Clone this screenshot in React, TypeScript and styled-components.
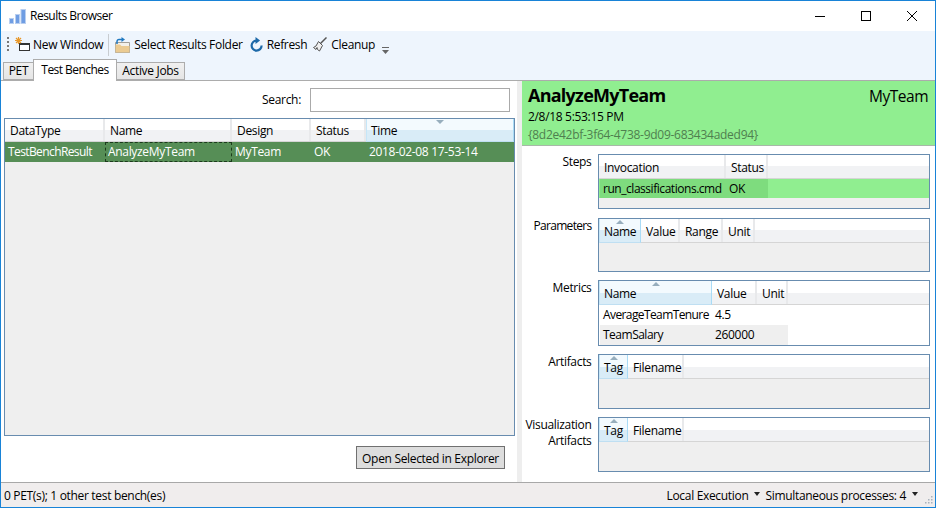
import React from "react";
import styled, { createGlobalStyle } from "styled-components";

const Global = createGlobalStyle`
  html, body { margin: 0; padding: 0; background: #fff; }
  * { box-sizing: border-box; }
  body { font-family: "Open Sans", "Noto Sans", sans-serif; font-size: 12px; color: #000; letter-spacing: -0.32px; }
`;

const Window = styled.div`
  width: 936px; height: 508px; display: flex; flex-direction: column;
  border: 1px solid #1883d7; background: #fff; overflow: hidden;
`;
const TitleBar = styled.div`
  height: 30px; flex: none; display: flex; align-items: center; padding-left: 8px; background: #fff;
`;
const TitleText = styled.div` margin: 0 0 2px 4px; flex: 1; letter-spacing: -0.5px; `;
const WinButton = styled.div`
  width: 46px; height: 30px; display: flex; align-items: center; justify-content: center;
`;
const Toolbar = styled.div`
  height: 27px; flex: none; display: flex; align-items: center; padding-left: 6px; background: #eef5fd;
`;
const Grip = styled.svg` width: 2px; height: 16px; margin-right: 6px; flex: none; `;
const ToolButton = styled.div<{ $gap?: number; $inner?: number }>`
  display: flex; align-items: center; gap: ${p => p.$inner ?? 4}px; margin-right: ${p => p.$gap ?? 7}px; white-space: nowrap;
`;
const ToolSeparator = styled.div` width: 1px; height: 22px; background: #c8ccd0; margin-right: 6px; `;
const Overflow = styled.svg` width: 7px; height: 7px; margin-top: 12px; `;
const TabStrip = styled.div`
  height: 23px; flex: none; display: flex; align-items: flex-end; padding-left: 3px;
  background: #eef5fd; border-bottom: 1px solid #acacac;
`;
const Tab = styled.div<{ $active?: boolean; $w: number }>`
  width: ${p => p.$w}px;
  height: ${p => (p.$active ? 22 : 18)}px;
  margin-bottom: ${p => (p.$active ? -1 : 0)}px;
  padding-top: ${p => (p.$active ? 2 : 0)}px;
  margin-left: -1px;
  position: relative; z-index: ${p => (p.$active ? 1 : 0)};
  background: ${p => (p.$active ? "#fff" : "linear-gradient(#f0f0f0, #e5e5e5)")};
  border: 1px solid #acacac; ${p => (p.$active ? "border-bottom: none; letter-spacing: -0.55px;" : "")}
  white-space: nowrap; line-height: 16px; text-align: center;
`;
const Content = styled.div` flex: 1; min-height: 0; display: flex; `;
const LeftPane = styled.div` width: 516px; flex: none; display: flex; flex-direction: column; `;
const SearchRow = styled.div`
  display: flex; align-items: center; justify-content: flex-end; gap: 9px;
  padding: 7px 7px 0 0; height: 31px; flex: none;
`;
const SearchLabel = styled.div` padding-bottom: 2px; `;
const SearchInput = styled.div` width: 200px; height: 24px; border: 1px solid #aaa; background: #fff; `;
const LeftGridWrap = styled.div` flex: 1; min-height: 0; display: flex; margin: 6px 2px 0 3px; `;
const ButtonRow = styled.div`
  flex: none; height: 46px; display: flex; justify-content: flex-end; padding: 10px 12px 0 0;
`;
const PushButton = styled.div`
  width: 149px; height: 23px; border: 1px solid #707070; background: #dddddd; padding-top: 1px;
  display: flex; align-items: center; justify-content: center; white-space: nowrap;
`;
const Splitter = styled.div` width: 5px; flex: none; background: #eeeeee; `;
const RightPane = styled.div` flex: 1; min-width: 0; display: flex; flex-direction: column; `;
const Header = styled.div`
  height: 65px; flex: none; background: #90ee90; border-bottom: 1px solid #a8b8a8;
  padding: 2px 7px 0 6px; display: flex; flex-direction: column;
`;
const HeaderTop = styled.div` display: flex; justify-content: space-between; align-items: center; height: 24px; `;
const ResultTitle = styled.div` font-size: 18px; font-weight: 700; letter-spacing: -0.75px; margin-top: -1px; `;
const ResultDesign = styled.div` font-size: 15.5px; letter-spacing: -0.5px; margin-top: 2px; `;
const HeaderDate = styled.div` line-height: 17px; margin-top: 1px; `;
const HeaderGuid = styled.div` line-height: 17px; margin-top: 1px; color: #4f7f4f; letter-spacing: -0.27px; `;
const Sections = styled.div`
  flex: 1; display: flex; flex-direction: column; padding: 8px 5px 0 0;
`;
const Section = styled.div<{ $h: number; $after: number }>`
  height: ${p => p.$h}px; margin-bottom: ${p => p.$after}px; flex: none; display: flex;
`;
const SectionLabel = styled.div<{ $tight?: boolean }>`
  width: 76px; flex: none; padding-right: 6.5px; text-align: right; line-height: 16px;
  ${p => (p.$tight ? "letter-spacing: -0.7px;" : "")}
`;
const Table = styled.div`
  flex: 1; min-width: 0; border: 1px solid #688caf; background: #efefef;
  display: flex; flex-direction: column; overflow: hidden;
`;
const HeadRow = styled.div<{ $h: number }>`
  display: flex; flex: none; height: ${p => p.$h}px;
  background: linear-gradient(#fff 0 50%, #f1f2f4 50% 100%);
  border-bottom: 1px solid #d5d5d5;
`;
const HeadCell = styled.div<{ $w: number; $sorted?: boolean; $top: number }>`
  width: ${p => p.$w}px; flex: none; position: relative;
  padding: ${p => p.$top}px 0 0 ${p => (p.$sorted ? 4 : 5)}px; line-height: 18px; white-space: nowrap;
  border-right: ${p => (p.$sorted ? "1px solid #a9dbf6" : "2px solid #e8e9eb")};
  ${p => (p.$sorted ? "border-left: 1px solid #c5e6f8;" : "")}
  background: ${p => (p.$sorted ? "linear-gradient(#f3fafe 0 50%, #d9ecf7 50% 100%)" : "transparent")};
  ${p => (p.$sorted ? "border-bottom: 1px solid #bfdff2; margin-bottom: -1px;" : "")}
`;
const SortMark = styled.span<{ $down?: boolean }>`
  position: absolute; top: 1px; left: 50%; margin-left: -4px; width: 0; height: 0;
  border-left: 4px solid transparent; border-right: 4px solid transparent;
  ${p => (p.$down ? "border-top: 4px solid #97aebd;" : "border-bottom: 4px solid #97aebd;")}
`;
const BodyRow = styled.div<{ $bg: string; $pad: number; $h: number }>`
  display: flex; flex: none; height: ${p => p.$h}px; background: ${p => p.$bg}; padding-left: ${p => p.$pad}px;
`;
const BodyCell = styled.div<{ $w: number; $bg?: string; $fg?: string; $focus?: boolean; $tight?: number }>`
  width: ${p => p.$w}px; flex: none; padding-left: 3px; line-height: 19px; white-space: nowrap;
  background: ${p => p.$bg ?? "transparent"}; color: ${p => p.$fg ?? "#000"};
  ${p => (p.$tight ? `letter-spacing: ${p.$tight}px;` : "")}
  ${p => (p.$focus ? "outline: 1px dashed #1c3a1c; outline-offset: -1px;" : "")}
`;
const StatusBar = styled.div`
  height: 25px; flex: none; display: flex; align-items: center; background: #f0eded;
  border-top: 1px solid #a8a8a8; padding-left: 3px;
`;
const StatusLeft = styled.div` flex: 1; `;
const StatusItem = styled.div` display: flex; align-items: center; gap: 6px; margin-right: 5px; white-space: nowrap; `;
const StatusArrow = styled.span`
  width: 0; height: 0; border-left: 3.5px solid transparent; border-right: 3.5px solid transparent;
  border-top: 4px solid #222; margin-bottom: 3px;
`;
const ResizeGrip = styled.svg` width: 9px; height: 9px; margin: 9px 2px 0 1px; flex: none; `;

type Col = { title: string; w: number; sorted?: "up" | "down" };
type Row = { bg: string; cellBg?: string; fg?: string; cells: string[]; focus?: number; h?: number; tight?: number };

const Grid = ({ cols, rows, pad = 0, offs, headH = 24 }: { cols: Col[]; rows?: Row[]; pad?: number; offs?: number[]; headH?: number }) => (
  <Table>
    <HeadRow $h={headH}>
      {cols.map(c => (
        <HeadCell key={c.title} $w={c.w} $sorted={!!c.sorted} $top={headH - 20}>
          {c.sorted && <SortMark $down={c.sorted === "down"} />}
          {c.title}
        </HeadCell>
      ))}
    </HeadRow>
    {rows?.map((r, i) => (
      <BodyRow key={i} $bg={r.bg} $pad={pad} $h={r.h ?? 20}>
        {r.cells.map((t, j) => (
          <BodyCell key={j} $w={offs ? offs[j] : cols[j].w} $bg={r.cellBg} $fg={r.fg} $focus={r.focus === j} $tight={j === 0 ? r.tight : undefined}>{t}</BodyCell>
        ))}
      </BodyRow>
    ))}
  </Table>
);

const AppIcon = () => (
  <svg width="17" height="15" viewBox="0 0 17 15">
    <rect x="0.5" y="9.5" width="4" height="5" fill="#6f9de3" stroke="#b9cff0" />
    <rect x="6.5" y="5.5" width="4" height="9" fill="#6f9de3" stroke="#b9cff0" />
    <rect x="12" y="0.5" width="4.5" height="14" fill="#6f9de3" stroke="#b9cff0" />
  </svg>
);
const NewWindowIcon = () => (
  <svg width="15" height="15" viewBox="0 0 15 15">
    <rect x="4.5" y="6.5" width="10" height="7" fill="#fff" stroke="#333" />
    <rect x="5" y="6" width="10" height="2" fill="#333" />
    <path d="M3.5 0v7M0 3.5h7M1 1l5 5M6 1L1 6" stroke="#e8982a" strokeWidth="1.2" />
  </svg>
);
const FolderIcon = () => (
  <svg width="15" height="16" viewBox="0 0 15 16">
    <path d="M0.5 5.5h14v10h-14z" fill="#f4f1ea" stroke="#8f8a80" strokeWidth="0.8" />
    <path d="M0.5 7.5h4.5l1.5 1.5h8v6.5h-14z" fill="#ebcb92" />
    <path d="M2 7V4.5a2 2 0 0 1 2-2h3" fill="none" stroke="#1f78c0" strokeWidth="1.5" />
    <path d="M6.5 0l3.5 2.5-3.5 2.5z" fill="#1f78c0" />
  </svg>
);
const RefreshIcon = () => (
  <svg width="13" height="15" viewBox="0 0 13 15">
    <path d="M6.8 3.6A5 5 0 1 0 11.6 8.6" fill="none" stroke="#1d69a8" strokeWidth="2.2" />
    <path d="M5.5 0l4.6 3.5L5.5 7z" fill="#1d69a8" />
  </svg>
);
const BroomIcon = () => (
  <svg width="14" height="15" viewBox="0 0 14 15">
    <path d="M13.5 0.5L7.5 6.5" stroke="#555" strokeWidth="1.5" />
    <path d="M5.5 4.5l4 4-3 5.5-2-1.5-.5-2-1 2L0.5 10.5 3 9z" fill="#eee" stroke="#555" strokeWidth="1" strokeLinejoin="round" />
  </svg>
);

export default function App() {
  return (
    <>
      <Global />
      <Window>
        <TitleBar>
          <AppIcon />
          <TitleText>Results Browser</TitleText>
          <WinButton>
            <svg width="10" height="10"><path d="M0 5.5h10" stroke="#000" /></svg>
          </WinButton>
          <WinButton>
            <svg width="10" height="10"><rect x="0.5" y="0.5" width="9" height="9" fill="none" stroke="#000" /></svg>
          </WinButton>
          <WinButton>
            <svg width="10" height="10"><path d="M0 0l10 10M10 0L0 10" stroke="#000" /></svg>
          </WinButton>
        </TitleBar>
        <Toolbar>
          <Grip viewBox="0 0 2 16">
            {[0, 4, 8, 12].map(y => <rect key={y} x="0" y={y} width="2" height="2" fill="#777" />)}
          </Grip>
          <ToolButton $gap={5} $inner={3}><NewWindowIcon />New Window</ToolButton>
          <ToolSeparator />
          <ToolButton><FolderIcon />Select Results Folder</ToolButton>
          <ToolButton $gap={6}><RefreshIcon />Refresh</ToolButton>
          <ToolButton><BroomIcon />Cleanup</ToolButton>
          <Overflow viewBox="0 0 7 7">
            <rect x="0" y="0" width="7" height="1" fill="#666" />
            <path d="M0 3h7L3.5 7z" fill="#666" />
          </Overflow>
        </Toolbar>
        <TabStrip>
          <Tab $w={31}>PET</Tab>
          <Tab $active $w={84}>Test Benches</Tab>
          <Tab $w={69}>Active Jobs</Tab>
        </TabStrip>
        <Content>
          <LeftPane>
            <SearchRow>
              <SearchLabel>Search:</SearchLabel>
              <SearchInput />
            </SearchRow>
            <LeftGridWrap>
              <Grid
                headH={23}
                cols={[
                  { title: "DataType", w: 100 },
                  { title: "Name", w: 127 },
                  { title: "Design", w: 79 },
                  { title: "Status", w: 55 },
                  { title: "Time", w: 148, sorted: "down" },
                ]}
                rows={[{
                  bg: "#568e56", fg: "#fff", focus: 1, tight: -0.6,
                  cells: ["TestBenchResult", "AnalyzeMyTeam", "MyTeam", "OK", "2018-02-08 17-53-14"],
                }]}
              />
            </LeftGridWrap>
            <ButtonRow><PushButton>Open Selected in Explorer</PushButton></ButtonRow>
          </LeftPane>
          <Splitter />
          <RightPane>
            <Header>
              <HeaderTop>
                <ResultTitle>AnalyzeMyTeam</ResultTitle>
                <ResultDesign>MyTeam</ResultDesign>
              </HeaderTop>
              <HeaderDate>2/8/18 5:53:15 PM</HeaderDate>
              <HeaderGuid>{"{8d2e42bf-3f64-4738-9d09-683434aded94}"}</HeaderGuid>
            </Header>
            <Sections>
              <Section $h={55} $after={9}>
                <SectionLabel>Steps</SectionLabel>
                <Grid
                  pad={1}
                  offs={[126, 42]}
                  cols={[{ title: "Invocation", w: 127 }, { title: "Status", w: 42 }]}
                  rows={[{ bg: "#90ee90", cellBg: "#7edc7e", cells: ["run_classifications.cmd", "OK"], h: 19, tight: -0.46 }]}
                />
              </Section>
              <Section $h={54} $after={8}>
                <SectionLabel $tight>Parameters</SectionLabel>
                <Grid cols={[
                  { title: "Name", w: 42, sorted: "up" }, { title: "Value", w: 39 },
                  { title: "Range", w: 43 }, { title: "Unit", w: 32 },
                ]} />
              </Section>
              <Section $h={66} $after={8}>
                <SectionLabel>Metrics</SectionLabel>
                <Grid
                  pad={1}
                  offs={[112, 45, 31]}
                  cols={[{ title: "Name", w: 113, sorted: "up" }, { title: "Value", w: 45 }, { title: "Unit", w: 31 }]}
                  rows={[
                    { bg: "#fff", tight: -0.6, cells: ["AverageTeamTenure", "4.5", ""] },
                    { bg: "#fff", cellBg: "#efefef", tight: -0.5, cells: ["TeamSalary", "260000", ""] },
                  ]}
                />
              </Section>
              <Section $h={55} $after={8}>
                <SectionLabel>Artifacts</SectionLabel>
                <Grid cols={[{ title: "Tag", w: 29, sorted: "up" }, { title: "Filename", w: 56 }]} />
              </Section>
              <Section $h={55} $after={0}>
                <SectionLabel>Visualization Artifacts</SectionLabel>
                <Grid cols={[{ title: "Tag", w: 29, sorted: "up" }, { title: "Filename", w: 56 }]} />
              </Section>
            </Sections>
          </RightPane>
        </Content>
        <StatusBar>
          <StatusLeft>0 PET(s); 1 other test bench(es)</StatusLeft>
          <StatusItem>Local Execution<StatusArrow /></StatusItem>
          <StatusItem>Simultaneous processes: 4<StatusArrow /></StatusItem>
          <ResizeGrip viewBox="0 0 9 9">
            {[[7, 1], [4, 4], [7, 4], [1, 7], [4, 7], [7, 7]].map(([x, y]) => (
              <rect key={`${x}-${y}`} x={x} y={y} width="1.5" height="1.5" fill="#a8b2bc" />
            ))}
          </ResizeGrip>
        </StatusBar>
      </Window>
    </>
  );
}
